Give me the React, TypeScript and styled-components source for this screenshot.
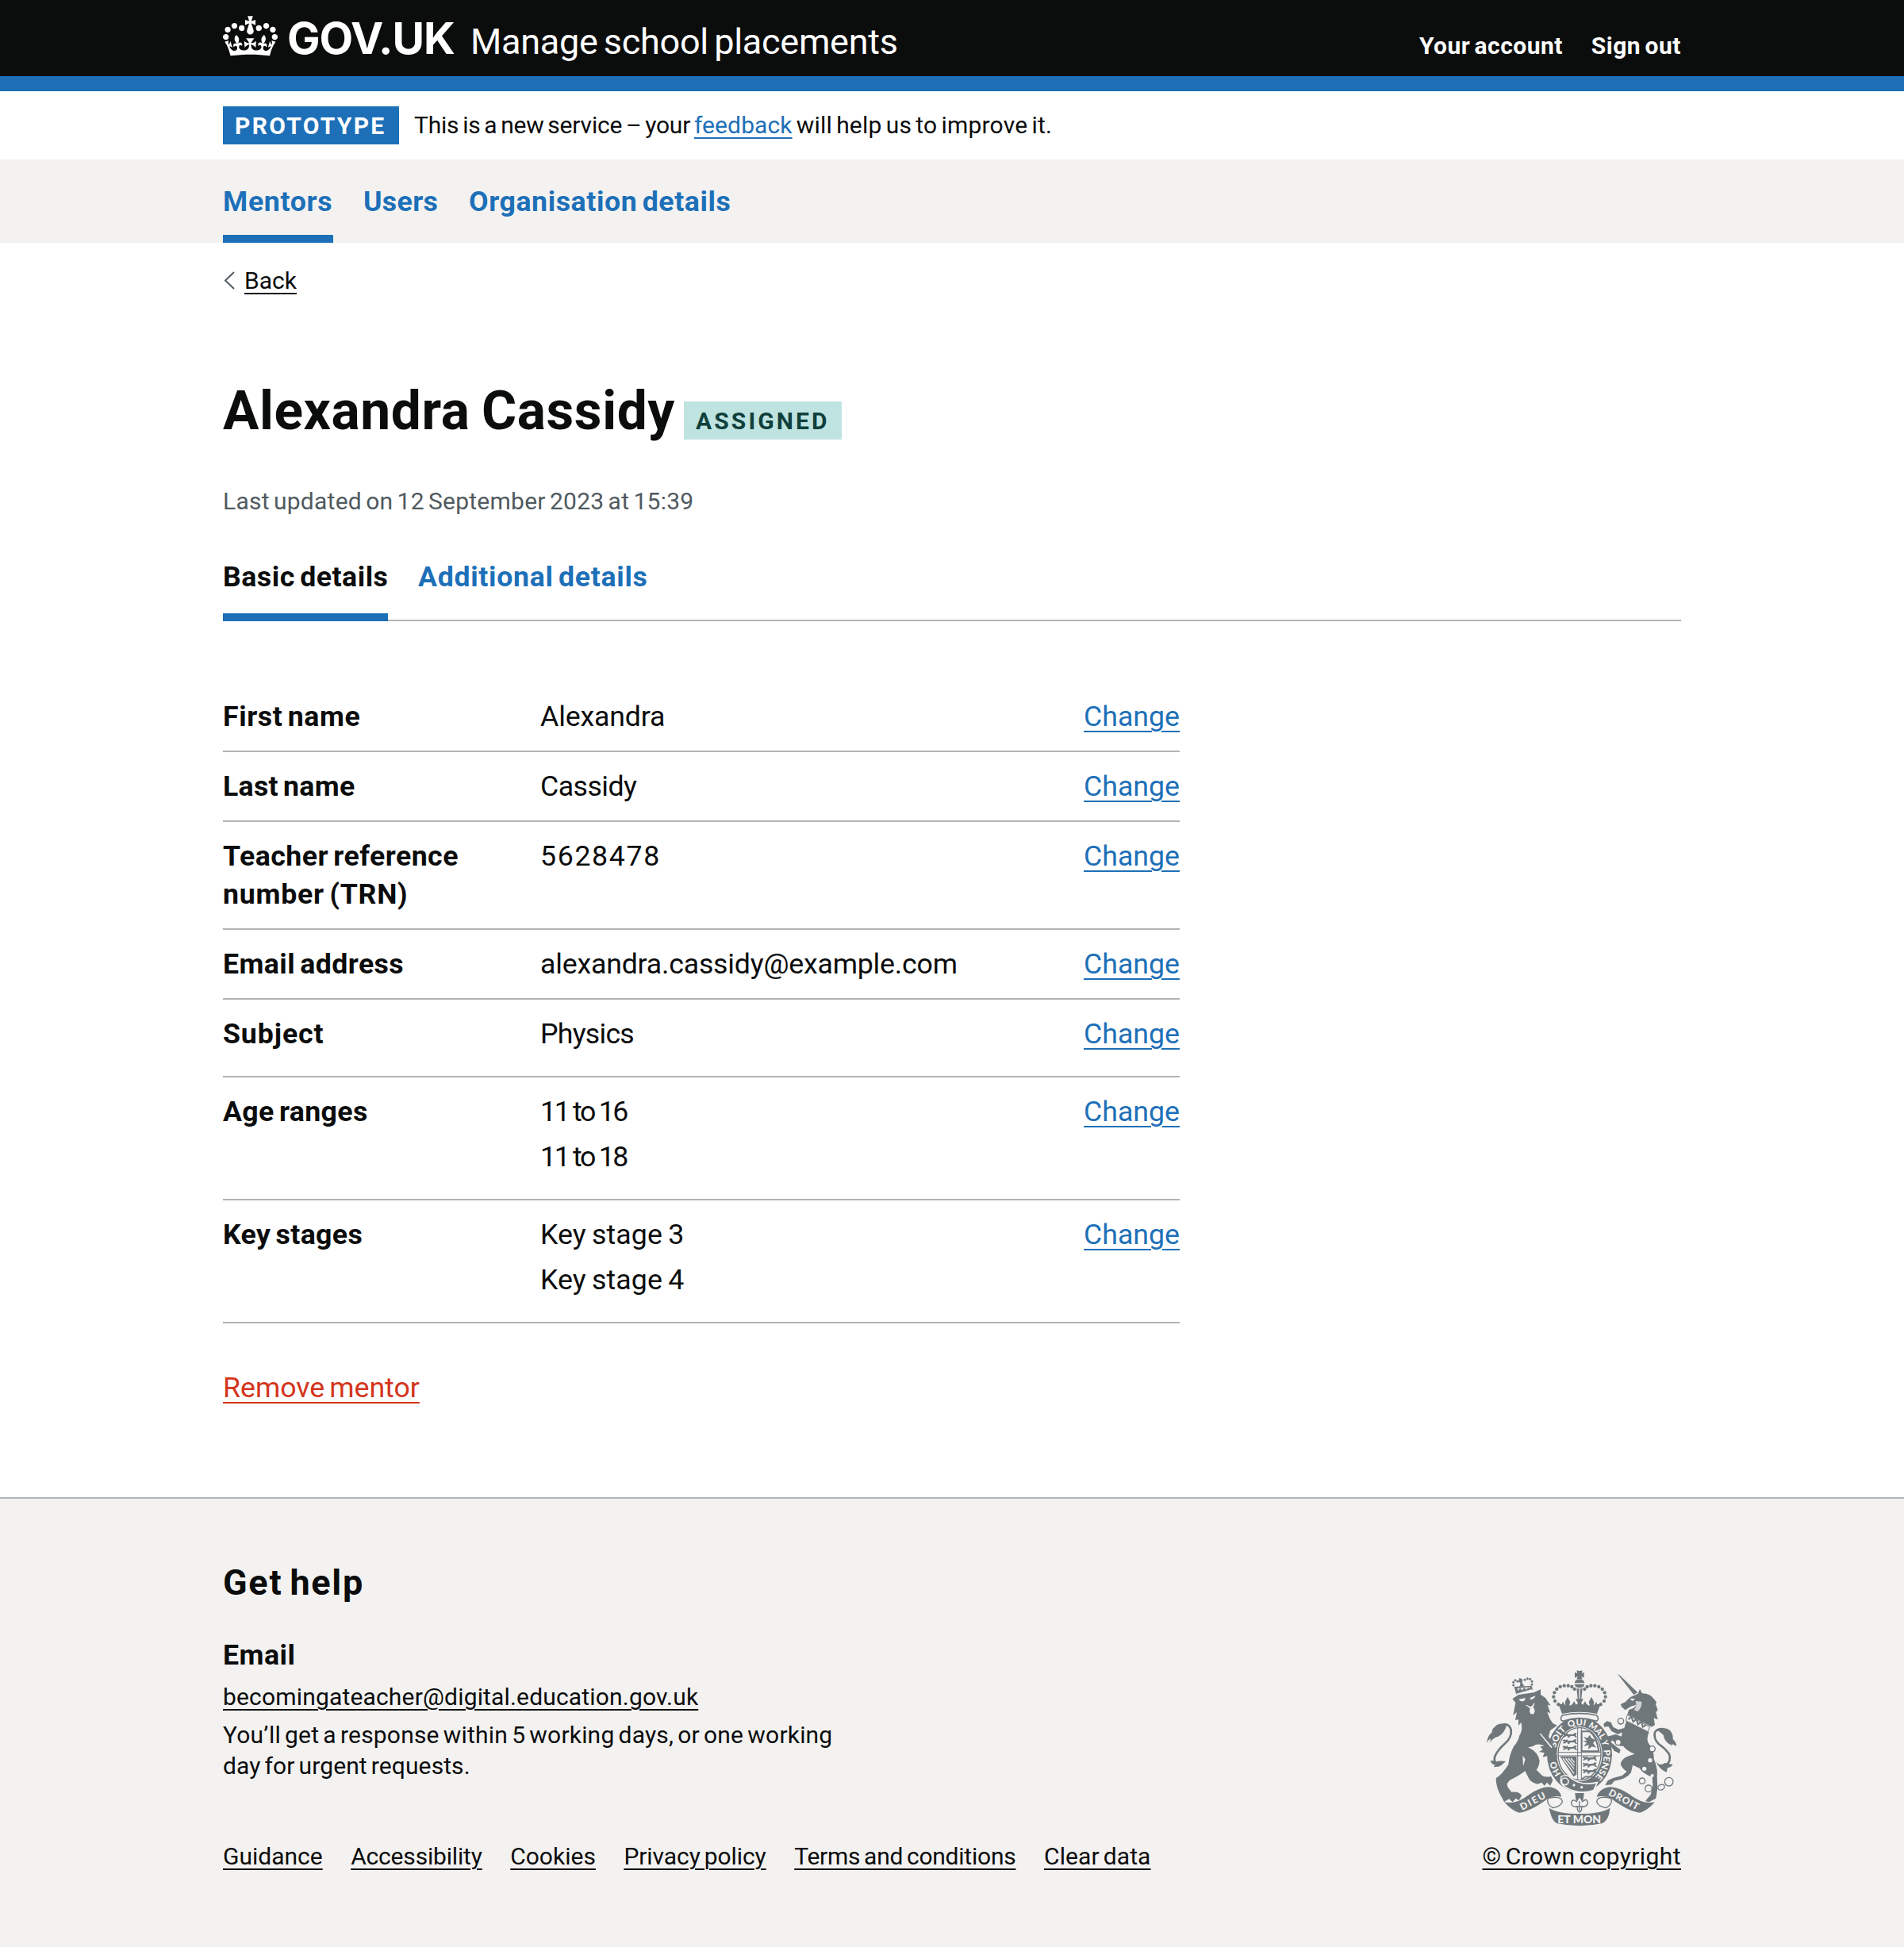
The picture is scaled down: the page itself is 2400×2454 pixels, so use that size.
import React from 'react';
import styled, { createGlobalStyle, css } from 'styled-components';

const color = {
  ink: '#0b0c0c',
  blue: '#1d70b8',
  grey: '#505a5f',
  line: '#b1b4b6',
  panel: '#f3f2f1',
  red: '#d4351c',
  crest: '#6f777b',
};

const GlobalStyle = createGlobalStyle`
  *, *::before, *::after { box-sizing: border-box; }
  html, body { margin: 0; padding: 0; background: ${color.panel}; }
  body {
    color: ${color.ink};
    font-family: Roboto, "Liberation Sans", Arial, sans-serif;
    font-size: 35.7px;
    line-height: 48px;
    -webkit-font-smoothing: antialiased;
  }
  h1, h2, h3, p, dl, dd, dt, ul { margin: 0; padding: 0; }
  ul { list-style: none; }
`;

interface Tracked {
  $track?: number;
  $gap?: number;
}

const tracking = css<Tracked>`
  letter-spacing: ${({ $track = 0 }) => $track}px;
  word-spacing: ${({ $gap = -0.083 }) => $gap}em;
  white-space: nowrap;
`;

const Label = styled.span<Tracked>`
  ${tracking}
`;

const Link = styled.a<Tracked & { $tone?: string; $small?: boolean }>`
  ${tracking}
  color: ${({ $tone = color.blue }) => $tone};
  text-decoration: underline;
  text-decoration-thickness: 2px;
  text-underline-offset: ${({ $small }) => ($small ? 4.8 : 5.8)}px;
`;

const Container = styled.div`
  width: 1838px;
  margin: 0 auto;
`;

const Page = styled.div`
  background: #fff;
`;

/* Header */

const HeaderBar = styled.header`
  height: 115px;
  background: ${color.ink};
  border-bottom: 19px solid ${color.blue};
`;

const HeaderRow = styled(Container)`
  display: flex;
  align-items: baseline;
  height: 96px;
  padding-top: 16px;
  color: #fff;
`;

const Logo = styled.a`
  display: flex;
  align-items: baseline;
  line-height: 64px;
`;

const LogoCrown = styled.svg`
  width: 69px;
  height: 51px;
  margin-right: 12px;
  transform: translateY(3px);
`;

const LogoText = styled.span<Tracked>`
  ${tracking}
  width: 231px;
  font-family: Inter, Roboto, sans-serif;
  font-size: 55.4px;
  font-weight: 700;
`;

const ServiceName = styled.span<Tracked>`
  ${tracking}
  flex: 1;
  font-size: 45px;
`;

const AccountNav = styled.nav`
  display: flex;
  gap: 36px;
  font-size: 30px;
  font-weight: 700;
`;

/* Phase banner */

const PhaseBanner = styled(Container)`
  display: flex;
  align-items: center;
  height: 86px;
  font-size: 30px;
`;

const Tag = styled.strong<Tracked & { $width: number; $mint?: boolean }>`
  ${tracking}
  display: inline-block;
  width: ${({ $width }) => $width}px;
  height: 48px;
  padding: 2px 0 0 15px;
  font-size: 30px;
  font-weight: 700;
  line-height: 46px;
  color: ${({ $mint }) => ($mint ? '#10403c' : '#fff')};
  background: ${({ $mint }) => ($mint ? '#bfe3e0' : color.blue)};
`;

const PhaseText = styled.p`
  padding-left: 19px;
`;

/* Navigation */

const NavBand = styled.nav`
  background: ${color.panel};
`;

const TabRow = styled(Container)<{ $ruled?: boolean }>`
  display: flex;
  gap: 38px;
  height: ${({ $ruled }) => ($ruled ? 103 : 105)}px;
  border-bottom: ${({ $ruled }) => ($ruled ? `2px solid ${color.line}` : '0')};
`;

const Tab = styled.a<Tracked & { $width: number; $current?: boolean; $dark?: boolean; $tall?: boolean }>`
  ${tracking}
  width: ${({ $width }) => $width}px;
  height: ${({ $tall }) => ($tall ? 103 : 105)}px;
  padding-top: ${({ $tall }) => ($tall ? 23 : 29)}px;
  font-weight: 700;
  color: ${({ $dark }) => ($dark ? color.ink : color.blue)};
  border-bottom: ${({ $current }) => ($current ? `10px solid ${color.blue}` : '0')};
`;

/* Main */

const Main = styled(Container)`
  padding-top: 24px;
`;

const BackLink = styled.div`
  display: flex;
  align-items: center;
  height: 48px;
  font-size: 30px;
`;

const Chevron = styled.svg`
  width: 15px;
  height: 23px;
  margin: 0 12px 1px 0;
`;

const TitleRow = styled.div`
  display: flex;
  align-items: baseline;
  gap: 11px;
  height: 96px;
  margin-top: 100px;
`;

const Title = styled.h1<Tracked>`
  ${tracking}
  width: 570px;
  font-size: 67.6px;
  line-height: 80px;
`;

const Updated = styled.p<Tracked>`
  ${tracking}
  margin: 34px 0 24px;
  font-size: 30px;
  color: ${color.grey};
`;

const Summary = styled.dl`
  width: 1206px;
  padding-top: 77px;
`;

const SummaryRow = styled.div`
  display: grid;
  grid-template-columns: 400px 1fr auto;
  padding: 19px 0;
  border-bottom: 2px solid ${color.line};
`;

const Key = styled.dt`
  display: flex;
  flex-direction: column;
  font-weight: 700;
`;

const Value = styled.dd`
  display: flex;
  flex-direction: column;
`;

const ListItem = styled.span<Tracked>`
  ${tracking}
  margin-bottom: 9.5px;
`;

const Removal = styled.p`
  padding: 57.5px 0 114px;
`;

/* Footer */

const FooterBand = styled.footer`
  height: 567px;
  background: ${color.panel};
  border-top: 2px solid ${color.line};
  font-size: 30px;
`;

const FooterRow = styled(Container)`
  display: flex;
  align-items: flex-end;
  justify-content: space-between;
  padding-top: 79px;
`;

const HelpHeading = styled.h2<Tracked>`
  ${tracking}
  font-size: 45px;
  line-height: 54px;
`;

const HelpSubheading = styled.h3<Tracked>`
  ${tracking}
  margin: 40px 0 0;
  font-size: 35.7px;
`;

const HelpMail = styled.p`
  margin-top: 5px;
`;

const HelpText = styled.p`
  display: flex;
  flex-direction: column;
  margin-top: 5px;
  line-height: 38.5px;
`;

const FooterLinks = styled.ul`
  display: flex;
  gap: 35.5px;
  margin-top: 71px;
`;

const Licence = styled.div`
  display: flex;
  flex-direction: column;
  align-items: flex-end;
`;

const CrestArt = styled.svg`
  width: 240px;
  height: 198px;
  margin: 0 5px 14px 0;
`;

function GovCrown() {
  return (
    <LogoCrown viewBox="0 0 132 97" aria-hidden="true">
      <path
        fill="currentColor"
        fillRule="evenodd"
        d="M25 30.2c3.5 1.5 7.7-.2 9.1-3.7 1.5-3.6-.2-7.8-3.9-9.2-3.6-1.4-7.6.3-9.1 3.9-1.4 3.5.3 7.5 3.9 9zM9 39.5c3.6 1.5 7.8-.2 9.2-3.7 1.5-3.6-.2-7.8-3.9-9.1-3.6-1.5-7.6.2-9.1 3.8-1.4 3.5.3 7.5 3.8 9zM4.4 57.2c3.5 1.5 7.7-.2 9.1-3.8 1.5-3.6-.2-7.7-3.9-9.1-3.5-1.5-7.6.3-9.1 3.8-1.4 3.5.3 7.6 3.9 9.1zm38.3-21.4c3.5 1.5 7.7-.2 9.1-3.8 1.5-3.6-.2-7.7-3.9-9.1-3.6-1.5-7.6.3-9.1 3.8-1.3 3.6.4 7.7 3.9 9.1zm64.4-5.6c-3.6 1.5-7.8-.2-9.1-3.7-1.5-3.6.2-7.8 3.8-9.2 3.6-1.4 7.7.3 9.2 3.9 1.3 3.5-.4 7.5-3.9 9zm15.9 9.3c-3.6 1.5-7.7-.2-9.1-3.7-1.5-3.6.2-7.8 3.7-9.1 3.6-1.5 7.7.2 9.2 3.8 1.5 3.5-.3 7.5-3.8 9zm4.7 17.7c-3.6 1.5-7.8-.2-9.2-3.8-1.5-3.6.2-7.7 3.9-9.1 3.6-1.5 7.7.3 9.2 3.8 1.3 3.5-.4 7.6-3.9 9.1zM89.3 35.8c-3.6 1.5-7.8-.2-9.2-3.8-1.4-3.6.2-7.7 3.9-9.1 3.6-1.5 7.7.3 9.2 3.8 1.4 3.6-.3 7.7-3.9 9.1zM69.7 17.7l8.9 4.7V9.3l-8.9 2.8c-.2-.3-.5-.6-.9-.9L72.4 0H59.6l3.5 11.2c-.3.3-.6.5-.9.9l-8.8-2.8v13.1l8.8-4.7c.3.3.6.7.9.9l-5 15.4v.1c-.2.8-.4 1.6-.4 2.4 0 4.1 3.1 7.5 7 8.1h.2c.3 0 .7.1 1 .1.4 0 .7 0 1-.1h.2c4-.6 7.1-4.1 7.1-8.1 0-.8-.1-1.7-.4-2.4V34l-5.1-15.4c.4-.2.7-.6 1-.9zM66 92.8c16.9 0 32.8 1.1 47.1 3.2 4-16.9 8.9-26.7 14-33.5l-9.6-3.4c1 4.9 1.1 7.2 0 10.2-1.5-1.4-3-4.3-4.2-8.7L108.6 76c2.8-2 5-3.2 7.5-3.3-4.4 9.4-10 11.9-13.6 11.2-4.3-.8-6.3-4.6-5.6-7.9 1-4.7 5.7-5.9 8-.5 4.3-8.7-3-11.4-7.6-8.8 7.1-7.2 7.9-13.5 2.1-21.1-8 6.1-8.1 12.3-4.5 20.8-4.7-5.4-12.1-2.5-9.5 6.2 3.4-5.2 7.9-2 7.2 3.1-.6 4.3-6.4 7.8-13.5 7.2-10.3-.9-10.9-8-11.2-13.8 2.5-.5 7.1 1.8 11 7.3L80.2 60c-4.1 4.4-8 5.3-12.3 5.4 1.4-4.4 8-11.6 8-11.6H55.5s6.4 7.2 7.9 11.6c-4.2-.1-8-1-12.3-5.4l1.4 16.4c3.9-5.5 8.5-7.7 10.9-7.3-.3 5.8-.9 12.8-11.1 13.8-7.2.6-12.9-2.9-13.5-7.2-.7-5 3.8-8.3 7.1-3.1 2.7-8.7-4.6-11.6-9.4-6.2 3.7-8.5 3.6-14.7-4.6-20.8-5.8 7.6-5 13.9 2.2 21.1-4.7-2.6-11.9.1-7.7 8.8 2.3-5.5 7.1-4.2 8.1.5.7 3.3-1.3 7.1-5.7 7.9-3.5.7-9-1.8-13.5-11.2 2.5.1 4.7 1.3 7.5 3.3l-4.7-15.4c-1.2 4.4-2.7 7.2-4.3 8.7-1.1-3-.9-5.3 0-10.2l-9.5 3.4c5 6.9 9.9 16.7 14 33.5 14.8-2.1 30.8-3.2 47.7-3.2z"
      />
    </LogoCrown>
  );
}

const archBeads: [number, number][] = [
  [373, 205], [360, 192], [355, 176], [358, 160], [367, 147], [380, 138], [395, 134], [410, 134], [424, 138], [434, 147],
];

/* One walking lion of the English quarters, drawn in a 60x22 box. */
const passant =
  'M2 8 L8 3 L14 6 L20 3 L24 8 L42 7 L50 2 L58 4 L53 8 L54 14 L60 20 L51 19 L47 14 L32 15 L28 21 L20 20 L25 16 L18 14 L9 19 L3 16 L11 12 Z';

function PassantLions({ x, y }: { x: number; y: number }) {
  return (
    <g transform={`translate(${x} ${y})`} fill={color.crest}>
      <path d={passant} />
      <path d={passant} transform="translate(0 24)" />
      <path d={passant} transform="translate(0 48)" />
    </g>
  );
}

function RoyalCrown() {
  return (
    <g fill={color.crest}>
      <path d="M442 76 Q453 80 464 76 L461 87 L470 83 V104 L460 99 L464 109 H442 L446 99 L435 104 V83 L445 87 Z" />
      <path d="M434 124 Q436 110 453 109 Q470 110 472 124 Z" />
      <path d="M434 128 H472 Q470 141 453 142 Q436 141 434 128 Z" />
      <path d="M442 145 H464 L460 184 H446 Z" />
      <path d="M453 145 V182" stroke={color.panel} strokeWidth="4" />
      {archBeads.map(([x, y]) => (
        <g key={`${x}-${y}`}>
          <circle cx={x} cy={y} r="6.5" />
          <circle cx={906 - x} cy={y} r="6.5" />
        </g>
      ))}
      <path d="M370 194 Q382 206 386 204 L390 194 Q396 206 400 208 L398 196 L408 176 L418 196 L414 209 Q428 208 432 192 L440 206 L447 200 L438 184 H468 L459 200 L466 206 L474 192 Q478 208 492 209 L488 196 L498 176 L508 196 L506 208 Q512 206 516 194 L520 204 Q526 206 536 194 L519 240 Q453 226 387 240 Z" />
      <path d="M388 246 Q453 232 518 246 Q530 262 516 268 Q453 246 390 268 Q376 262 388 246 Z" fill={color.panel} stroke={color.crest} strokeWidth="5" />
    </g>
  );
}

function Lion() {
  return (
    <g>
      <path
        d="M150 428 Q128 430 132 404 Q142 378 172 352 Q198 328 194 300 Q186 274 160 282"
        fill="none"
        stroke={color.crest}
        strokeWidth="8"
      />
      <g fill={color.crest}>
        <path d="M178 282 Q150 270 132 290 Q122 296 121 312 Q106 320 102 350 Q108 338 118 334 L113 348 Q130 328 146 326 Q168 316 178 282 Z" />
        <path d="M116 418 Q126 414 136 422 Q150 416 174 420 L158 434 Q146 444 128 440 L134 434 Q120 432 116 418 Z" />
        <path d="M199 184 L222 168 L280 160 L306 148 L306 168 L324 180 L344 209 L332 206 L343 238 L331 233 L340 258 L352 276 L368 284 L342 304 L336 326 L352 356 L368 402 L358 418 L348 406 L334 414 L336 398 L314 404 L320 388 L300 384 L314 376 L304 364 L320 362 Q300 352 286 358 Q272 368 258 366 Q298 386 302 418 Q300 440 290 452 L312 474 Q328 482 345 476 L352 492 L342 512 L330 500 L320 512 L310 500 L294 506 Q270 500 262 486 L247 456 Q232 470 192 490 Q174 502 182 518 L196 536 Q226 532 234 550 L224 568 L212 560 L200 574 L186 562 L168 574 L160 558 Q136 520 137 484 Q160 470 184 432 Q188 394 204 364 Q222 344 226 322 Q240 300 232 272 L222 286 L222 262 L210 264 L216 234 L202 246 L211 198 Z" />
        <path d="M206 138 L272 134 L276 150 L214 168 Z" />
        <path d="M226 104 L238 110 L236 122 L244 136 L226 138 L230 124 L222 118 Z" />
        {[[203, 132], [203, 121], [210, 113], [219, 118], [246, 112], [256, 107], [266, 109], [273, 118], [273, 129]].map(([x, y]) => (
          <circle key={`${x}-${y}`} cx={x} cy={y} r="4.5" />
        ))}
      </g>
      <g fill={color.panel}>
        <path d="M222 186 L248 180 L246 190 Q234 198 222 186 Z M266 180 L286 172 Q284 184 268 187 Z" />
        <path d="M248 206 Q266 210 284 200 L278 216 Q288 228 280 240 Q268 246 264 232 L266 220 Z" />
        <path d="M214 164 L274 147 V152 L216 170 Z" />
        <path d="M238 398 L248 412 L240 438 Z" />
        <path d="M306 314 L350 366 L346 370 L302 316 Z" />
        <path d="M216 144 L222 154 L228 143 L236 152 L244 142 L252 150 L260 140 L264 147 L266 138 Z" opacity=".8" />
      </g>
      <path d="M252 206 L272 198 L278 206 L268 214 Z" fill={color.crest} />
    </g>
  );
}

function Unicorn() {
  return (
    <g>
      <path
        d="M776 438 Q802 420 792 392 Q776 370 752 354 Q732 334 738 310 Q748 294 772 298"
        fill="none"
        stroke={color.crest}
        strokeWidth="8"
      />
      <g fill={color.crest}>
        <path d="M750 304 Q776 286 796 304 Q808 320 806 336 Q818 346 820 362 L802 354 Q808 364 798 358 Q774 346 770 320 Z" />
        <path d="M742 420 Q756 440 776 426 L806 432 Q798 444 786 444 L782 462 Q752 448 742 420 Z" />
        <path d="M597 90 L606 95 L673 160 L658 168 Z" />
        <path d="M608 204 L626 196 L644 178 L674 164 L681 147 L690 163 Q722 164 734 184 L744 196 L741 204 L749 226 L742 234 L749 262 L734 256 L738 282 L726 290 L634 242 L640 224 Q662 220 668 206 L648 212 L626 226 L614 216 Z" />
        <path d="M630 268 L716 310 Q704 334 714 352 Q736 380 734 410 Q750 448 746 476 L748 520 L742 560 L716 574 L702 570 L722 546 L730 512 L728 478 Q696 470 680 446 L654 434 L648 462 Q630 488 584 494 L574 508 L550 510 L560 492 L582 482 L614 474 L632 458 Q612 446 608 428 Q616 404 650 396 L662 392 Q632 380 618 362 Q598 364 588 350 L576 340 L572 348 L594 366 L608 376 L604 390 L584 380 L562 350 L556 326 L590 318 L612 326 L614 310 L598 318 L574 306 L562 288 L546 290 L544 278 L556 268 L572 272 L580 290 L600 300 L622 294 Z" />
      </g>
      <g fill={color.panel}>
        <path d="M644 182 L664 184 L652 192 Z" />
        <path d="M664 192 Q674 214 658 224 L672 232 Q690 216 688 194 Z" opacity=".75" />
        <circle cx="720" cy="416" r="8" />
        <circle cx="698" cy="448" r="8" />
        <circle cx="728" cy="474" r="6" />
      </g>
      <path d="M634 244 L718 290 L712 308 L628 266 Z" fill={color.panel} stroke={color.crest} strokeWidth="3" />
      <path d="M638 262 L648 250 L656 270 L668 260 L674 280 L688 270 L692 290 L706 282" fill="none" stroke={color.crest} strokeWidth="6" />
      <g fill={color.panel} stroke={color.crest} strokeWidth="4">
        <circle cx="609" cy="268" r="11" />
        <circle cx="599" cy="348" r="11" />
        <circle cx="728" cy="373" r="11" />
        <circle cx="690" cy="494" r="11" />
        <circle cx="714" cy="523" r="13" />
        <ellipse cx="762" cy="518" rx="13" ry="10" transform="rotate(-25 762 518)" />
        <circle cx="791" cy="497" r="16" />
      </g>
    </g>
  );
}

const garterWords = [
  { word: 'HO', start: 24, length: 54 },
  { word: 'SOIT', start: 126, length: 82 },
  { word: 'QUI', start: 220, length: 64 },
  { word: 'MAL', start: 294, length: 70 },
  { word: 'Y', start: 370, length: 20 },
  { word: 'PENSE', start: 404, length: 112 },
];

function Shield() {
  return (
    <g>
      <ellipse cx="453" cy="394" rx="127" ry="146" fill={color.panel} />
      <ellipse cx="453" cy="394" rx="123" ry="142" fill={color.crest} />
      <ellipse cx="453" cy="392" rx="86" ry="104" fill={color.panel} />
      <ellipse cx="453" cy="392" rx="81" ry="99" fill="none" stroke={color.crest} strokeWidth="4" />
      <PassantLions x={386} y={310} />
      <PassantLions x={461} y={398} />
      <path d="M461 307 H492 Q518 326 526 382 H461 Z" fill="none" stroke={color.crest} strokeWidth="6" />
      <path d="M468 326 L482 332 L492 320 L498 332 L514 340 L504 350 L516 368 L500 364 L486 374 L488 358 L468 364 L480 350 L466 342 L480 342 Z" fill={color.crest} />
      <path d="M380 402 H442 V470 L430 478 Z" fill={color.crest} />
      <path d="M390 408 L432 466 M400 408 L432 448 M410 408 L434 436 M420 408 L434 424" stroke={color.panel} strokeWidth="4" />
      <path d="M446 293 V492 M460 293 V492 M372 386 H534 M372 399 H534" stroke={color.crest} strokeWidth="3" />
      <path d="M462 486 L476 478 H504" stroke={color.crest} strokeWidth="5" fill="none" />
      <path id="garter" d="M400.2 484.9 A92 111 0 0 1 453 283 A92 111 0 0 1 499 490.1" fill="none" />
      <g fill={color.panel} fontFamily="Lato, Roboto, sans-serif" fontWeight="900" fontSize="33">
        {garterWords.map(({ word, start, length }) => (
          <text key={word}>
            <textPath href="#garter" startOffset={start} textLength={length} lengthAdjust="spacingAndGlyphs">
              {word}
            </textPath>
          </text>
        ))}
      </g>
      <path d="M384 478 Q404 466 422 484 Q460 514 520 500 L506 530 Q450 548 400 518 Q376 506 384 478 Z" fill={color.crest} stroke={color.panel} strokeWidth="5" />
      <circle cx="398" cy="496" r="13" fill="none" stroke={color.panel} strokeWidth="5" />
      <circle cx="432" cy="510" r="5" fill={color.panel} />
      <circle cx="461" cy="518" r="5" fill={color.panel} />
    </g>
  );
}

function Motto() {
  return (
    <g>
      <path d="M436 540 H470 L467 566 H439 Z" fill={color.crest} />
      <path
        d="M453 552 L464 572 Q484 556 484 580 Q480 590 470 592 L462 592 L460 606 L453 612 L446 606 L444 592 H436 Q422 590 422 576 Q426 560 442 572 Z"
        fill={color.panel}
        stroke={color.crest}
        strokeWidth="4"
      />
      <path d="M453 570 V606 M438 591 H468" stroke={color.crest} strokeWidth="4" />
      <g fill={color.panel} stroke={color.crest} strokeWidth="4">
        <path d="M334 560 Q388 548 388 574 Q380 592 352 596 Q326 580 334 560 Z" />
        <path d="M572 560 Q518 548 518 574 Q526 592 554 596 Q580 580 572 560 Z" />
      </g>
      <g fill={color.crest}>
        <path d="M168 574 Q214 584 262 546 Q312 512 348 518 Q380 526 384 554 Q358 548 332 562 Q264 612 224 614 Q196 606 168 574 Z" />
        <path d="M738 574 Q692 584 644 546 Q594 512 558 518 Q526 526 518 554 Q548 548 574 562 Q642 612 682 614 Q710 606 738 574 Z" />
        <path d="M338 596 Q370 618 453 618 Q536 618 568 596 Q566 640 540 654 Q453 674 366 654 Q346 642 338 596 Z" />
      </g>
      <g fill={color.panel} fontFamily="Lato, Roboto, sans-serif" fontWeight="900" fontSize="36">
        <text transform="translate(236 606) rotate(-28)" textLength="104">DIEU</text>
        <text transform="translate(560 546) rotate(28)" textLength="124">DROIT</text>
        <text x="370" y="653" fontSize="42" textLength="164" lengthAdjust="spacingAndGlyphs">ET MON</text>
      </g>
    </g>
  );
}

function RoyalArms() {
  return (
    <CrestArt viewBox="102 72 720 594" aria-hidden="true">
      <Shield />
      <RoyalCrown />
      <Lion />
      <Unicorn />
      <Motto />
    </CrestArt>
  );
}

interface Text {
  text: string;
  track?: number;
  gap?: number;
}

interface Detail {
  key: Text[];
  value: Text[];
  list?: boolean;
}

const details: Detail[] = [
  { key: [{ text: 'First name', track: 0.55 }], value: [{ text: 'Alexandra', track: -0.15 }] },
  { key: [{ text: 'Last name', track: 0.27 }], value: [{ text: 'Cassidy', track: -0.55 }] },
  {
    key: [{ text: 'Teacher reference', track: 0.45 }, { text: 'number (TRN)', track: 0.75 }],
    value: [{ text: '5628478', track: 1.65 }],
  },
  { key: [{ text: 'Email address', track: 0.4 }], value: [{ text: 'alexandra.cassidy@example.com', track: -0.2 }] },
  { key: [{ text: 'Subject', track: 0.9 }], value: [{ text: 'Physics', track: -0.75 }], list: true },
  {
    key: [{ text: 'Age ranges', track: 0.35 }],
    value: [{ text: '11 to 16', track: -2.4, gap: -0.02 }, { text: '11 to 18', track: -2.4, gap: -0.02 }],
    list: true,
  },
  {
    key: [{ text: 'Key stages', track: 0.35 }],
    value: [{ text: 'Key stage 3', track: 0.1, gap: -0.05 }, { text: 'Key stage 4', track: 0.1, gap: -0.05 }],
    list: true,
  },
];

const footerLinks: Text[] = [
  { text: 'Guidance' },
  { text: 'Accessibility', track: -0.18 },
  { text: 'Cookies' },
  { text: 'Privacy policy', track: -0.07 },
  { text: 'Terms and conditions', track: -0.23 },
  { text: 'Clear data', track: 0.1 },
];

export default function App() {
  return (
    <Page>
      <GlobalStyle />
      <HeaderBar>
        <HeaderRow>
          <Logo>
            <GovCrown />
            <LogoText $track={-1}>GOV.UK</LogoText>
          </Logo>
          <ServiceName $track={-0.27}>Manage school placements</ServiceName>
          <AccountNav>
            <Label $track={0.45}>Your account</Label>
            <Label $track={0.5}>Sign out</Label>
          </AccountNav>
        </HeaderRow>
      </HeaderBar>

      <PhaseBanner>
        <Tag $width={222} $track={2.3}>PROTOTYPE</Tag>
        <PhaseText>
          <Label $track={-0.2}>This is a new service – your </Label>
          <Link $small $track={0.1}>feedback</Link>
          <Label $track={0.2}> will help us to improve it.</Label>
        </PhaseText>
      </PhaseBanner>

      <NavBand>
        <TabRow>
          <Tab $width={139} $track={0.65} $current>Mentors</Tab>
          <Tab $width={95} $track={0.35}>Users</Tab>
          <Tab $width={330} $track={0.57}>Organisation details</Tab>
        </TabRow>
      </NavBand>

      <Main>
        <BackLink>
          <Chevron viewBox="0 0 15 23" aria-hidden="true">
            <path d="M14 1 L3 11.5 L14 22" fill="none" stroke={color.grey} strokeWidth="2" />
          </Chevron>
          <Link $small $tone={color.ink}>Back</Link>
        </BackLink>

        <TitleRow>
          <Title $track={0.6} $gap={-0.045}>Alexandra Cassidy</Title>
          <Tag $width={199} $track={3.1} $mint>ASSIGNED</Tag>
        </TitleRow>
        <Updated $track={0.25}>Last updated on 12 September 2023 at 15:39</Updated>

        <TabRow $ruled>
          <Tab $width={208} $track={0.5} $current $dark $tall>Basic details</Tab>
          <Tab $width={290} $track={0.67} $tall>Additional details</Tab>
        </TabRow>

        <Summary>
          {details.map((row) => (
            <SummaryRow key={row.key[0].text}>
              <Key>
                {row.key.map((k) => (
                  <Label key={k.text} $track={k.track}>{k.text}</Label>
                ))}
              </Key>
              <Value>
                {row.value.map((v) =>
                  row.list ? (
                    <ListItem key={v.text} $track={v.track} $gap={v.gap}>{v.text}</ListItem>
                  ) : (
                    <Label key={v.text} $track={v.track}>{v.text}</Label>
                  ),
                )}
              </Value>
              <Link>Change</Link>
            </SummaryRow>
          ))}
        </Summary>

        <Removal>
          <Link $tone={color.red}>Remove mentor</Link>
        </Removal>
      </Main>

      <FooterBand>
        <FooterRow>
          <div>
            <HelpHeading $track={1.7}>Get help</HelpHeading>
            <HelpSubheading $track={0.5}>Email</HelpSubheading>
            <HelpMail>
              <Link $small $tone={color.ink} $track={0.17}>becomingateacher@digital.education.gov.uk</Link>
            </HelpMail>
            <HelpText>
              <Label $track={0.19}>You’ll get a response within 5 working days, or one working</Label>
              <Label $track={0.1}>day for urgent requests.</Label>
            </HelpText>
            <FooterLinks>
              {footerLinks.map((link) => (
                <li key={link.text}>
                  <Link $small $tone={color.ink} $track={link.track}>{link.text}</Link>
                </li>
              ))}
            </FooterLinks>
          </div>
          <Licence>
            <RoyalArms />
            <Link $small $tone={color.ink} $track={0.42}>© Crown copyright</Link>
          </Licence>
        </FooterRow>
      </FooterBand>
    </Page>
  );
}
